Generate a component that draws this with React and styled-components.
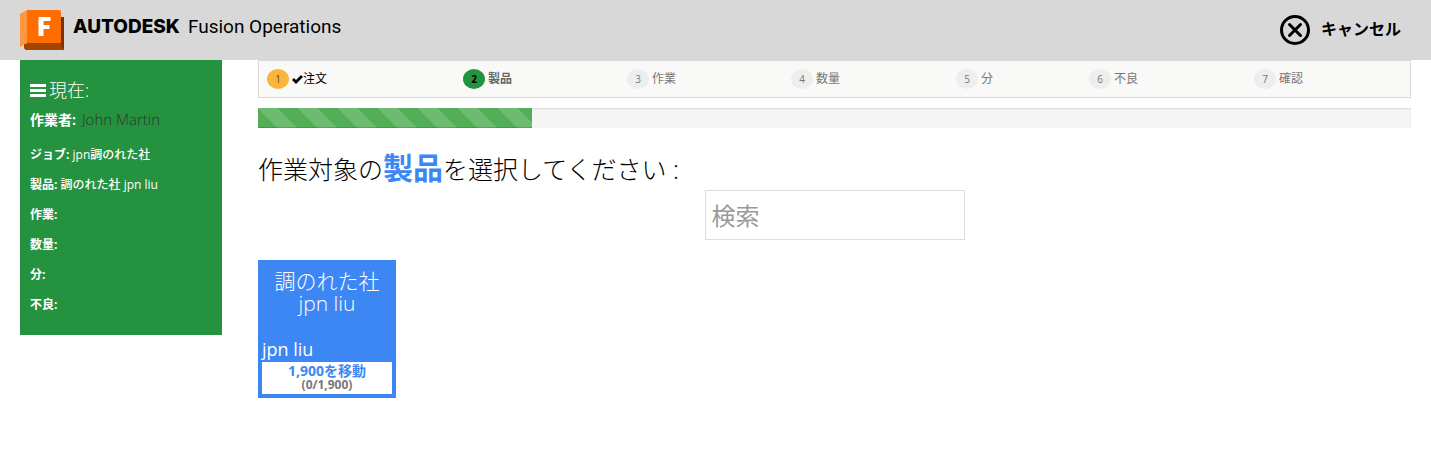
import React from "react";
import styled, { createGlobalStyle } from "styled-components";

const GlobalStyle = createGlobalStyle`
  *, *::before, *::after { box-sizing: border-box; }
  body {
    margin: 0;
    background: #fff;
    color: #000;
    font-family: "Open Sans", "Noto Sans CJK JP", sans-serif;
    font-size: 12px;
    line-height: 20px;
  }
`;

const Header = styled.header`
  display: flex;
  align-items: center;
  justify-content: space-between;
  height: 60px;
  padding: 0 30px 0 20px;
  background: #d8d8d8;
`;

const Brand = styled.a`
  display: flex;
  align-items: center;
  color: #000;
  text-decoration: none;
  font-size: 19px;
  line-height: 24px;
  padding-bottom: 6px;
`;

const Logo = styled.svg`
  width: 44px;
  height: 40px;
  margin: 6px 9px 0 0;
`;

const Maker = styled.strong`
  font-family: Inter, sans-serif;
  font-weight: 800;
  margin-right: 8px;
`;

const Product = styled.span`
  font-family: Roboto, sans-serif;
  font-weight: 400;
`;

const CancelButton = styled.button`
  display: flex;
  align-items: center;
  gap: 10px;
  padding: 0;
  border: 0;
  background: none;
  color: #000;
  font: 700 16px/24px "Open Sans", "Noto Sans CJK JP", sans-serif;
`;

const CancelLabel = styled.span`
  padding-bottom: 3px;
`;

const Layout = styled.div`
  display: flex;
  align-items: flex-start;
  gap: 36px;
  padding: 0 20px;
`;

const Sidebar = styled.aside`
  flex: none;
  width: 202px;
  padding: 20px 10px 15px;
  background: #24923e;
  color: #fff;
`;

const SidebarTitle = styled.h2`
  display: flex;
  align-items: center;
  gap: 3px;
  margin: 0 0 9px;
  font-size: 18px;
  line-height: 20px;
  font-weight: 300;
`;

const Operator = styled.p`
  margin: 0 0 10px;
  font-size: 15px;
  font-weight: 300;
  color: #333;

  strong {
    color: #fff;
    font-size: 14px;
    font-weight: 700;
    margin-right: 2px;
  }
`;

const Field = styled.p`
  margin: 0;
  line-height: 30px;
  font-weight: 500;

  strong { font-weight: 700; }
`;

const Main = styled.main`
  flex: 1;
  min-width: 0;
`;

const Steps = styled.ol`
  display: grid;
  grid-template-columns: 196fr 164fr 164fr 165fr 133fr 165fr 148fr;
  margin: 0 0 10px;
  padding: 8px;
  height: 38px;
  list-style: none;
  background: #f9f9f8;
  border: 1px solid #d8d8d8;
`;

const tones = {
  done: { badge: "#fbb43c", digit: "#6b4a14", text: "#000" },
  current: { badge: "#24923e", digit: "#000", text: "#666" },
  todo: { badge: "#eeeeee", digit: "#777", text: "#777" },
};

const StepItem = styled.li`
  display: flex;
  align-items: center;
  color: ${(p) => tones[p.$tone].text};
  font-weight: ${(p) => (p.$tone === "current" ? 700 : 400)};
`;

const StepBadge = styled.span`
  width: 22px;
  height: 20px;
  margin-right: 3px;
  border-radius: 50%;
  text-align: center;
  font-size: 10px;
  background: ${(p) => tones[p.$tone].badge};
  color: ${(p) => tones[p.$tone].digit};
`;

const Track = styled.div`
  height: 20px;
  background: #f5f5f5;
  box-shadow: inset 0 1px 2px rgba(0, 0, 0, 0.12);
`;

const Bar = styled.div`
  height: 100%;
  background-color: #53af57;
  background-image: linear-gradient(
    45deg,
    rgba(255, 255, 255, 0.15) 25%,
    transparent 25%,
    transparent 50%,
    rgba(255, 255, 255, 0.15) 50%,
    rgba(255, 255, 255, 0.15) 75%,
    transparent 75%
  );
  background-size: 40px 40px;
  box-shadow: inset 0 -1px 0 rgba(0, 0, 0, 0.15);
`;

const Prompt = styled.h1`
  margin: 20px 0 1px;
  font-size: 25px;
  line-height: 40px;
  font-weight: 300;

  strong {
    font-size: 30px;
    font-weight: 700;
    color: #3d87f5;
  }
`;

const SearchInput = styled.input`
  display: block;
  width: 260px;
  height: 50px;
  margin: 0 auto 20px;
  padding: 0 6px;
  border: 1px solid #ddd;
  background: #fff;
  font: 400 24px/32px "Open Sans", "Noto Sans CJK JP", sans-serif;

  &::placeholder { color: #999; opacity: 1; }
`;

const ProductCard = styled.button`
  display: flex;
  flex-direction: column;
  width: 138px;
  height: 138px;
  padding: 10px 4px 4px;
  border: 0;
  background: #3d87f5;
  color: #fff;
  font-family: inherit;
  text-align: center;
`;

const CardTitle = styled.span`
  flex: 1;
  width: 100%;
  font-size: 21px;
  line-height: 22px;
  font-weight: 300;
`;

const CardName = styled.span`
  width: 100%;
  text-align: left;
  font-size: 18px;
  line-height: 26px;
`;

const CardQuantity = styled.span`
  display: flex;
  flex-direction: column;
  width: 100%;
  height: 32px;
  padding-top: 2px;
  background: #fff;
  color: #777;
  font-size: 12px;
  line-height: 14px;
  font-weight: 700;

  strong { color: #3d87f5; font-size: 14px; font-weight: 700; }
`;

const steps = [
  ["注文", "done"],
  ["製品", "current"],
  ["作業", "todo"],
  ["数量", "todo"],
  ["分", "todo"],
  ["不良", "todo"],
  ["確認", "todo"],
];

const fields = [
  ["ジョブ", "jpn調のれた社"],
  ["製品", "調のれた社 jpn liu"],
  ["作業", ""],
  ["数量", ""],
  ["分", ""],
  ["不良", ""],
];

const FusionLogo = () => (
  <Logo viewBox="0 0 44 40" aria-hidden="true">
    <path d="M40 7h4v33H6l-2-2V34h36z" fill="#8f3b00" />
    <path d="M0 4l7-4v33L0 37z" fill="#ff9640" />
    <path d="M7 33h33l4 4v3H6l-2-2v-3z" fill="#a34500" />
    <path d="M40 7l4 1v32l-4-7z" fill="#7a3200" />
    <path d="M7 0h32q2 0 2 2v31H7z" fill="#ff6d00" />
    <path d="M18.500 7h12v4H23.500v4h6v4h-6v7h-5z" fill="#fff" />
  </Logo>
);

const CancelIcon = () => (
  <svg width="32" height="32" viewBox="0 0 32 32" fill="none" stroke="#000" aria-hidden="true">
    <circle cx="16" cy="16" r="13.5" strokeWidth="3" />
    <path d="M10.5 10.5l11 11M21.500 10.500l-11 11" strokeWidth="3" strokeLinecap="round" />
  </svg>
);

const MenuIcon = () => (
  <svg width="16" height="14" viewBox="0 0 16 14" fill="#fff" aria-hidden="true">
    <path d="M0 1h16v3H0zM0 6h16v3H0zM0 11h16v3H0z" />
  </svg>
);

const CheckIcon = () => (
  <svg width="11" height="10" viewBox="0 0 11 10" fill="none" stroke="#000" strokeWidth="2.800" aria-hidden="true">
    <path d="M1 5l3 3 6-6" />
  </svg>
);

export default function App() {
  return (
    <>
      <GlobalStyle />
      <Header>
        <Brand href="#">
          <FusionLogo />
          <Maker>AUTODESK</Maker>
          <Product>Fusion Operations</Product>
        </Brand>
        <CancelButton type="button">
          <CancelIcon />
          <CancelLabel>キャンセル</CancelLabel>
        </CancelButton>
      </Header>
      <Layout>
        <Sidebar>
          <SidebarTitle>
            <MenuIcon />
            現在:
          </SidebarTitle>
          <Operator>
            <strong>作業者:</strong> John Martin
          </Operator>
          {fields.map(([label, value]) => (
            <Field key={label}>
              <strong>{label}:</strong> {value}
            </Field>
          ))}
        </Sidebar>
        <Main>
          <Steps>
            {steps.map(([label, tone], i) => (
              <StepItem key={label} $tone={tone}>
                <StepBadge $tone={tone}>{i + 1}</StepBadge>
                {tone === "done" && <CheckIcon />}
                {label}
              </StepItem>
            ))}
          </Steps>
          <Track role="progressbar" aria-valuenow={24} aria-valuemin={0} aria-valuemax={100}>
            <Bar style={{ width: "23.8%" }} />
          </Track>
          <Prompt>
            作業対象の<strong>製品</strong>を選択してください :
          </Prompt>
          <SearchInput type="search" placeholder="検索" aria-label="検索" />
          <ProductCard type="button">
            <CardTitle>
              調のれた社
              <br />
              jpn liu
            </CardTitle>
            <CardName>jpn liu</CardName>
            <CardQuantity>
              <strong>1,900を移動</strong>
              (0/1,900)
            </CardQuantity>
          </ProductCard>
        </Main>
      </Layout>
    </>
  );
}
